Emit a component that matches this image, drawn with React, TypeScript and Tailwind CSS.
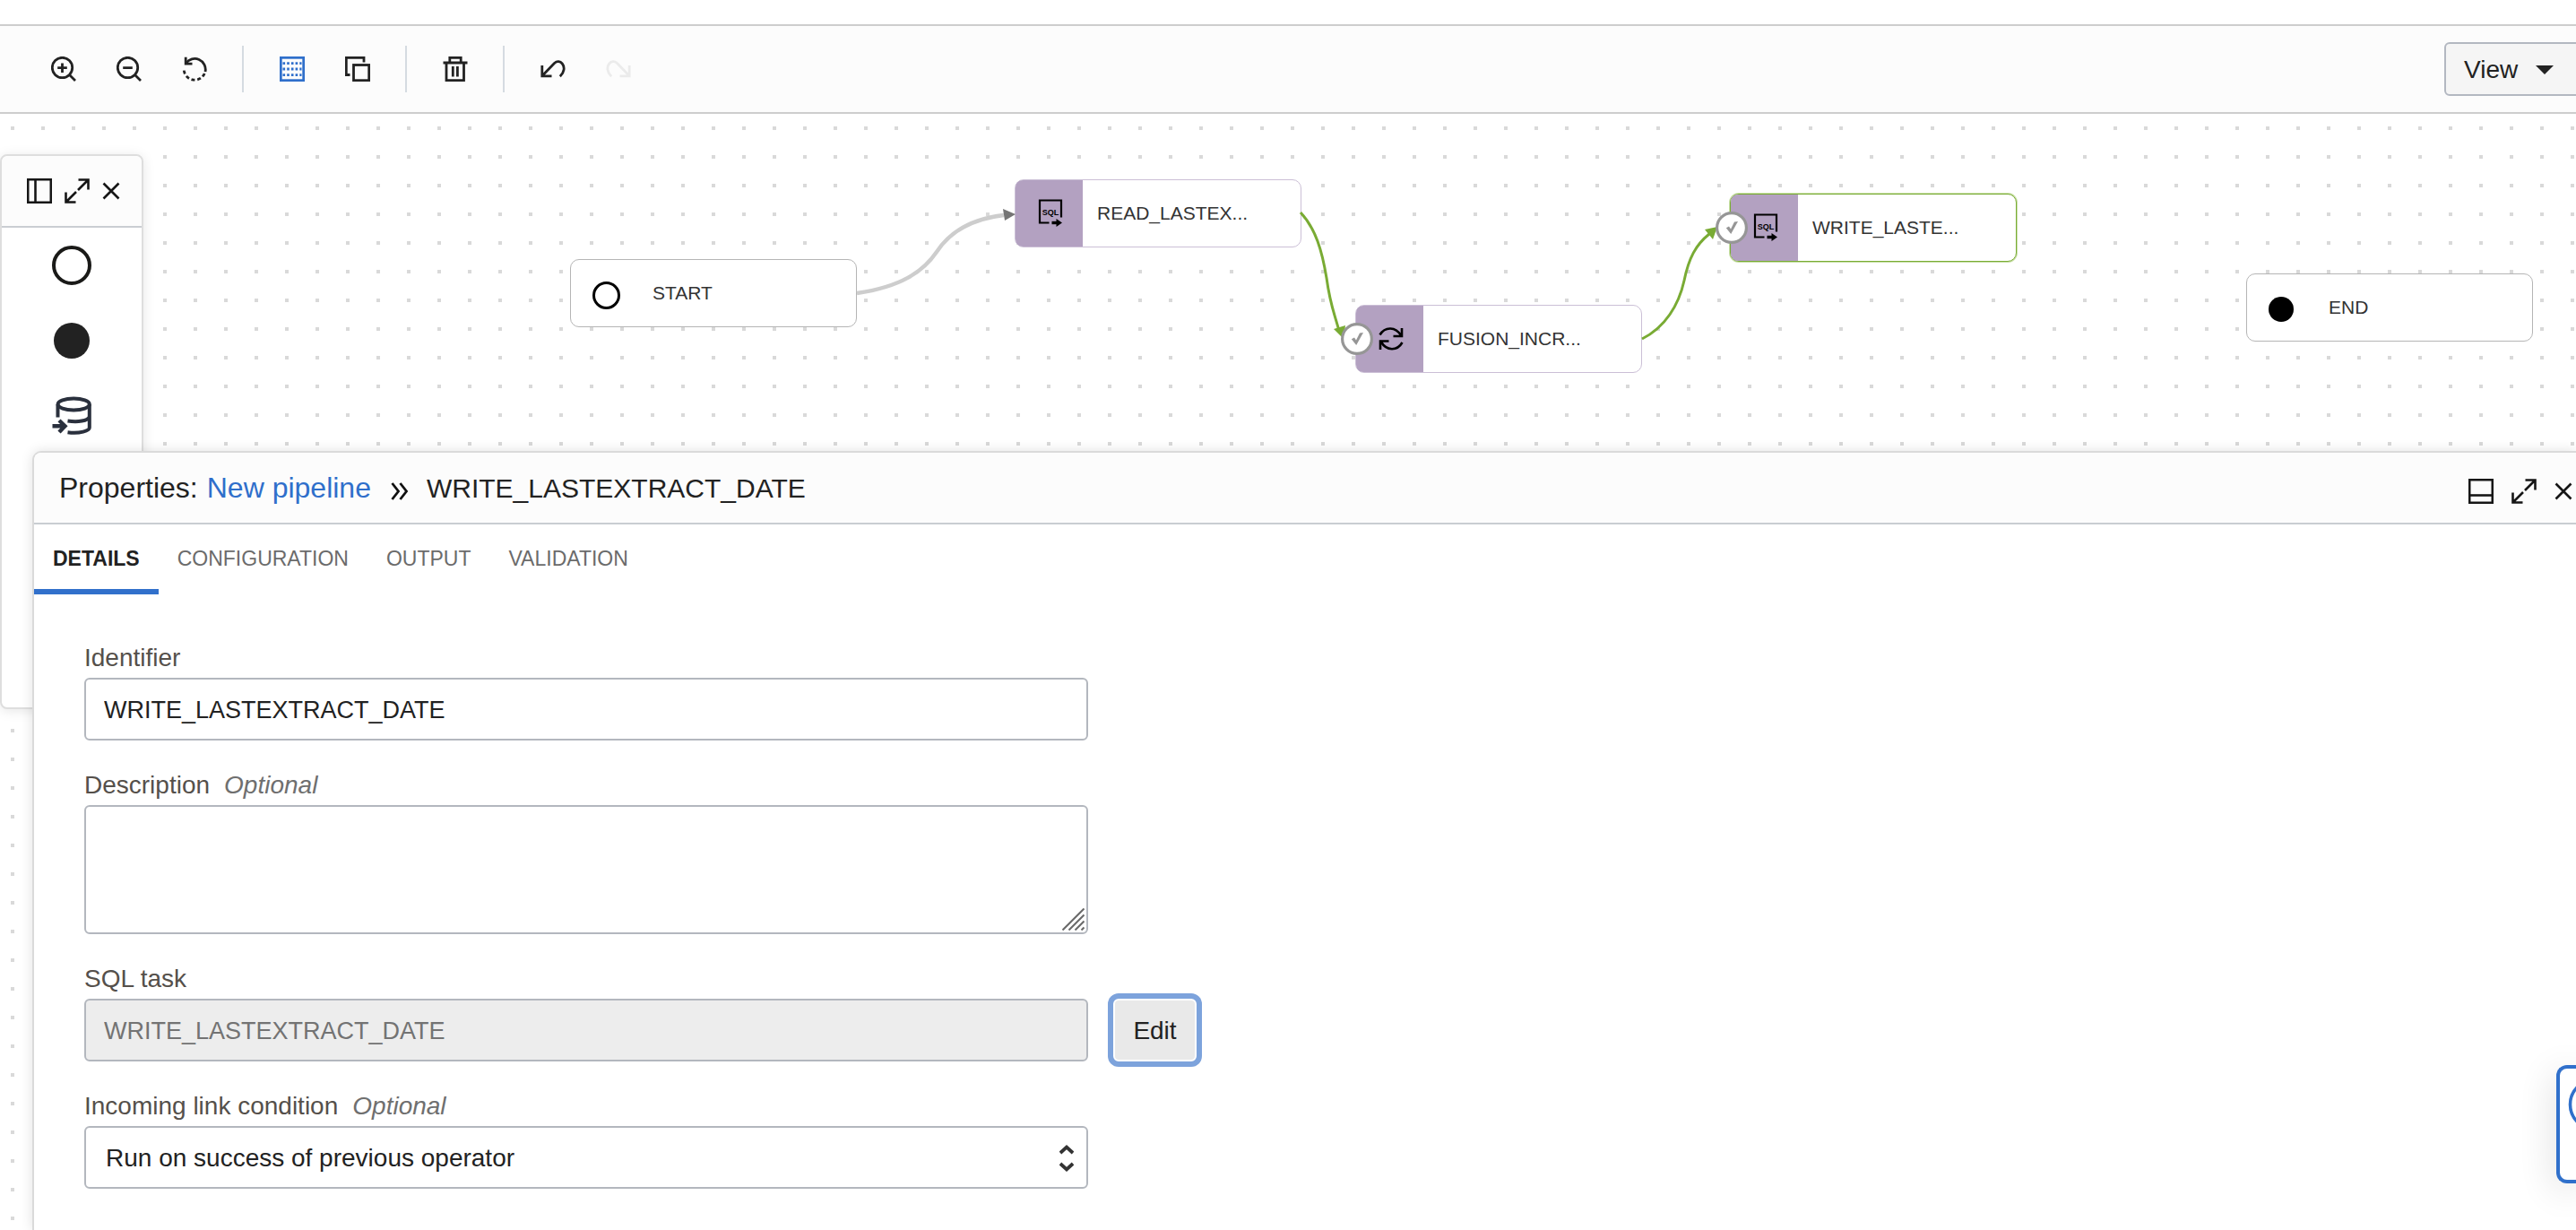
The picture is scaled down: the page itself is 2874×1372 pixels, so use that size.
import React from 'react';

interface IconButtonProps {
  label: string;
  className?: string;
  disabled?: boolean;
  children: React.ReactNode;
}

const ToolButton: React.FC<IconButtonProps> = ({ label, className = 'text-[#222]', disabled, children }) => (
  <button type="button" aria-label={label} disabled={disabled} className={`flex h-14 w-[73px] items-center justify-center ${className}`}>
    <svg className="h-7 w-7" viewBox="0 0 28 28" fill="none" stroke="currentColor" strokeWidth="2.8" aria-hidden="true">
      {children}
    </svg>
  </button>
);

const HeaderButton: React.FC<IconButtonProps> = ({ label, className = 'w-7', children }) => (
  <button type="button" aria-label={label} className={`shrink-0 text-[#161616] ${className}`}>
    <svg className="h-7 w-full" viewBox="0 0 28 28" fill="none" stroke="currentColor" strokeWidth="2.6" aria-hidden="true">
      {children}
    </svg>
  </button>
);

const Divider = () => <div className="mx-[17px] h-[52px] w-[2px] bg-[#d5dbe1]" />;

const ExpandPaths = () => (
  <>
    <path d="M15.5 1.5H26.5V12.5M26 2L15 13" />
    <path d="M1.5 15.5V26.5H12.5M2 26L13 15" />
  </>
);

const ClosePaths = () => <path d="M5.5 5.5L22.5 22.5M22.5 5.5L5.5 22.5" />;

const Toolbar = () => (
  <div className="flex h-[100px] shrink-0 items-center overflow-hidden border-y-2 border-[#cdcdcd] bg-[#fcfcfc] pl-[34px]">
    <ToolButton label="Zoom in">
      <circle cx="12.5" cy="12.5" r="11.2" />
      <path d="M20 20L27 27M12.5 7.5V18M7.2 12.7H17.8" />
    </ToolButton>
    <ToolButton label="Zoom out">
      <circle cx="12.5" cy="12.5" r="11.2" />
      <path d="M20 20L27 27M7.2 12.7H17.8" />
    </ToolButton>
    <ToolButton label="Reset zoom">
      <path d="M4.2 .8V8.2H11.5" />
      <path d="M4.5 7.5A12 12 0 0 1 26 17" />
      <path d="M25.2 19A12 12 0 0 1 2.2 14" strokeDasharray="4 2.8" />
    </ToolButton>
    <Divider />
    <ToolButton label="Toggle grid" className="text-[#2f6fcb]">
      <rect x="1.3" y="1.3" width="25.4" height="25.4" />
      <path d="M3.5 7.6H24.5M3.5 14H24.5M3.5 20.6H24.5" strokeDasharray="2.6 2.1" />
    </ToolButton>
    <ToolButton label="Duplicate">
      <path d="M21 6.5V1.3H1.3V20.5H5.5" />
      <rect x="9.5" y="9.5" width="17.2" height="17.2" />
    </ToolButton>
    <Divider />
    <ToolButton label="Delete">
      <path d="M0.5 7H27.5M7.8 7V1.4H20.2V7M4 7V26.7H23.5V7M11.3 11V22.5M16.4 11V22.5" />
    </ToolButton>
    <Divider />
    <ToolButton label="Undo">
      <path d="M1.8 10V21.8H12.5M2 21.5L15.5 7.5C18.5 4.8 22 5.2 24.3 8C27.3 11.8 26.8 17.5 21.8 22.3" />
    </ToolButton>
    <ToolButton label="Redo" disabled className="text-[#ebebeb]">
      <path d="M26.2 10V21.8H15.5M26 21.5L12.5 7.5C9.5 4.8 6 5.2 3.7 8C.7 11.8 1.2 17.5 6.2 22.3" />
    </ToolButton>
    <button
      type="button"
      className="-mr-4 ml-auto flex h-[60px] w-[163px] shrink-0 items-center gap-5 rounded-md border-2 border-[#b3b8c1] bg-[#f5f5f5] pl-5 pt-[2px] text-[28px] text-[#222]"
    >
      View
      <svg className="h-[10px] w-5" viewBox="0 0 20 10" fill="currentColor" aria-hidden="true">
        <path d="M0 0H20L10 10Z" />
      </svg>
    </button>
  </div>
);

const Palette = () => (
  <aside className="absolute left-0 top-[45px] h-[619px] w-40 rounded-lg border-2 border-[#dedede] bg-white shadow-[0_2px_14px_rgba(0,0,0,0.1)]">
    <div className="flex h-20 items-center rounded-t-lg border-b-2 border-[#cacdd2] bg-[#fcfcfc] pl-7">
      <HeaderButton label="Dock left">
        <rect x="1.2" y="1.2" width="25.6" height="25.6" />
        <path d="M9.5 1V27" />
      </HeaderButton>
      <HeaderButton label="Expand palette" className="ml-[14px] w-7">
        <ExpandPaths />
      </HeaderButton>
      <HeaderButton label="Close palette" className="ml-[10px] w-7">
        <ClosePaths />
      </HeaderButton>
    </div>
    <div className="flex flex-col items-center gap-10 pt-5">
      <button type="button" aria-label="Start operator" className="h-11 w-11 rounded-full border-4 border-[#1a1a18]" />
      <button type="button" aria-label="End operator" className="h-11 w-11 rounded-full border-2 border-transparent bg-[#222] bg-clip-padding" />
      <button type="button" aria-label="Integration task" className="h-11 w-11 text-[#2a303d]">
        <svg className="h-11 w-11" viewBox="0 0 44 44" fill="none" stroke="currentColor" strokeWidth="4" aria-hidden="true">
          <ellipse cx="24.2" cy="9" rx="17.6" ry="6.4" />
          <path d="M6.5 9V23.5M41.8 9V35C41.8 38.5 31 42 17.5 40.2M41.8 23C40 27.5 29 29.2 17.5 27.5" />
          <path d="M.5 33.2H14M8 27L14.5 33.2L8 40" strokeWidth="4.4" />
        </svg>
      </button>
    </div>
  </aside>
);

const SqlIcon = () => (
  <svg className="h-8 w-7" viewBox="0 0 28 32" fill="none" stroke="#000" strokeWidth="2.2" aria-hidden="true">
    <path d="M12.5 26.5H2V1.5H26V20.5" />
    <path d="M15.5 26.5H22" strokeWidth="3.4" />
    <path d="M20.5 22L27 26.5L20.5 31Z" fill="#000" stroke="none" />
    <text x="14" y="18" textAnchor="middle" fill="#000" stroke="none" fontSize="9" fontWeight="700">
      SQL
    </text>
  </svg>
);

const SyncIcon = () => (
  <svg className="h-7 w-7" viewBox="0 0 28 28" fill="none" stroke="#000" strokeWidth="2.6" aria-hidden="true">
    <path d="M26 2V11H16.5M1.5 9.5C7 .2 19 -.3 25.3 10.5" />
    <path d="M2 26V16.5H11.5M26.5 18C21 27.5 9 28 2.7 17" />
  </svg>
);

interface NodeProps {
  label: string;
  className: string;
  children: React.ReactNode;
}

const EventNode: React.FC<NodeProps> = ({ label, className, children }) => (
  <div className={`absolute flex h-[76px] w-80 items-center rounded-[10px] border border-[#b5b5b5] bg-white ${className}`}>
    <div className="flex w-[91px] items-center pl-6 pt-1">{children}</div>
    <span className="text-[21px] text-[#333]">{label}</span>
  </div>
);

const TaskNode: React.FC<NodeProps> = ({ label, className, children }) => (
  <div className={`absolute flex h-[76px] w-80 items-center rounded-[10px] border bg-white ${className}`}>
    <div className="flex h-full w-[75px] items-center justify-center rounded-l-[8px] bg-[#b3a1c1] pl-[2px]">{children}</div>
    <span className="pl-4 text-[21px] text-[#333]">{label}</span>
  </div>
);

const SuccessBadge = ({ className }: { className: string }) => (
  <svg className={`absolute h-9 w-9 ${className}`} viewBox="0 0 36 36" role="img" aria-label="Success">
    <circle cx="18" cy="18" r="16.4" fill="#fff" stroke="#969696" strokeWidth="3.2" />
    <path d="M11.8 18.2L15 16.4L17 19.6L21 11.6L25 11L17.2 25Z" fill="#969696" />
  </svg>
);

const Links = () => (
  <svg className="absolute left-0 top-0 h-[376px] w-full" fill="none" aria-hidden="true">
    <path d="M956 200C1005 193 1030 176 1045 154C1060 131 1085 117 1120 113" stroke="#cdcdcd" strokeWidth="4.4" />
    <path d="M1119 106L1133 112L1121 119Z" fill="#757575" />
    <path d="M1451 110C1468 128 1475 153 1480 183C1484 213 1488 220 1494 242" stroke="#79ab34" strokeWidth="3" />
    <path d="M1488 240L1501 236L1499 251Z" fill="#79ab34" />
    <path d="M1832 251C1858 238 1873 213 1879 186C1884 161 1892 146 1907 134" stroke="#79ab34" strokeWidth="3" />
    <path d="M1902 129L1916 126L1911 140Z" fill="#79ab34" />
  </svg>
);

const inputClass =
  'h-[70px] w-full rounded-md border-2 border-[#b3b7be] px-5 pt-[2px] text-[27px] text-[#222] outline-none disabled:bg-[#ededed] disabled:text-[#737373]';

interface FieldProps {
  id: string;
  label: string;
  optional?: boolean;
  children: React.ReactNode;
}

const Field: React.FC<FieldProps> = ({ id, label, optional, children }) => (
  <div className="w-[1120px] max-w-full">
    <label htmlFor={id} className="mb-[6px] flex gap-4 text-[28px] leading-8 text-[#55504b]">
      {label}
      {optional && <em className="text-[#6f6f6f]">Optional</em>}
    </label>
    {children}
  </div>
);

const TABS = ['DETAILS', 'CONFIGURATION', 'OUTPUT', 'VALIDATION'];

const PropertiesPanel = () => (
  <section className="absolute bottom-0 left-9 right-0 top-[376px] rounded-tl-[10px] border-l-2 border-t-2 border-[#dadada] bg-white shadow-[0_0_14px_rgba(0,0,0,0.12)]">
    <header className="flex h-20 items-center rounded-tl-[8px] border-b-2 border-[#c9cdd2] bg-[#fcfcfc] pl-7 text-[32px] text-[#222]">
      <span>Properties:</span>
      <a href="#pipeline" className="ml-[10px] text-[#2f6fcb]">
        New pipeline
      </a>
      <svg className="ml-[22px] mt-2 h-5 w-5" viewBox="0 0 20 20" fill="none" stroke="#111" strokeWidth="2.8" aria-hidden="true">
        <path d="M1.5 1L8.5 10L1.5 19M10.5 1L17.5 10L10.5 19" />
      </svg>
      <h1 className="ml-5 text-[30px]">WRITE_LASTEXTRACT_DATE</h1>
      <div className="ml-auto mt-2 flex items-center">
        <HeaderButton label="Dock bottom">
          <rect x="1.2" y="1.2" width="25.6" height="25.6" />
          <path d="M1 18.5H27" />
        </HeaderButton>
        <HeaderButton label="Expand properties" className="ml-5 w-7">
          <ExpandPaths />
        </HeaderButton>
        <HeaderButton label="Close properties" className="ml-4 w-7">
          <ClosePaths />
        </HeaderButton>
      </div>
    </header>

    <div role="tablist" className="flex h-[78px] text-[23px]">
      {TABS.map((tab, i) => (
        <button
          key={tab}
          type="button"
          role="tab"
          aria-selected={i === 0}
          className={`border-b-[6px] px-[21px] pt-1 ${i === 0 ? 'border-[#3170cb] font-bold text-[#222]' : 'border-transparent text-[#6b6b6b]'}`}
        >
          {tab}
        </button>
      ))}
    </div>

    <form className="flex flex-col gap-[34px] pl-14 pt-[55px]">
      <Field id="identifier" label="Identifier">
        <input id="identifier" type="text" defaultValue="WRITE_LASTEXTRACT_DATE" className={inputClass} />
      </Field>

      <Field id="description" label="Description" optional>
        <div className="relative">
          <textarea
            id="description"
            className="block h-36 w-full resize-none rounded-md border-2 border-[#b3b7be] px-5 py-3 text-[28px] text-[#222] outline-none"
          />
          {/* Resize grip */}
          <svg className="pointer-events-none absolute bottom-1 right-1 h-[25px] w-[25px]" viewBox="0 0 25 25" stroke="#6a6a6a" strokeWidth="2.1" aria-hidden="true">
            <path d="M.5 24.5L24.5 .5M7.5 24.5L24.5 7.5M14.5 24.5L24.5 14.5M21.5 24.5L24.5 21.5" />
          </svg>
        </div>
      </Field>

      <div className="flex items-end gap-7">
        <Field id="sql-task" label="SQL task">
          <input id="sql-task" type="text" disabled defaultValue="WRITE_LASTEXTRACT_DATE" className={inputClass} />
        </Field>
        <button
          type="button"
          className="h-[70px] w-[93px] rounded-md border-2 border-white bg-[#e9e9e9] pt-[2px] text-[28px] text-[#222] shadow-[0_0_0_6px_#7da3dc]"
        >
          Edit
        </button>
      </div>

      <Field id="link-condition" label="Incoming link condition" optional>
        <div className="relative">
          <select
            id="link-condition"
            className="block h-[70px] w-full appearance-none rounded-md border-2 border-[#b3b7be] bg-white px-[22px] pt-[2px] text-[28px] text-[#222] outline-none"
          >
            <option>Run on success of previous operator</option>
            <option>Run on failure of previous operator</option>
            <option>Always run</option>
          </select>
          <svg className="pointer-events-none absolute right-4 top-5 h-8 w-4" viewBox="0 0 16 32" fill="none" stroke="#333" strokeWidth="3.8" aria-hidden="true">
            <path d="M1 10L8 3.5L15 10M1 22L8 28.5L15 22" />
          </svg>
        </div>
      </Field>
    </form>
  </section>
);

const HelpWidget = () => (
  <button
    type="button"
    aria-label="Help"
    className="absolute bottom-[52px] right-0 h-[132px] w-[22px] overflow-hidden rounded-l-[12px] border-y-4 border-l-4 border-[#3070cb] bg-white shadow-[0_8px_40px_rgba(0,0,0,0.16)]"
  >
    <svg className="h-full w-full" viewBox="0 0 18 124" preserveAspectRatio="xMinYMin slice" fill="none" stroke="#3070cb" strokeWidth="3.6" aria-hidden="true">
      <circle cx="39" cy="40" r="27.5" />
    </svg>
  </button>
);

export default function App() {
  return (
    <div className="flex h-screen flex-col overflow-hidden bg-white pt-[27px] font-['Liberation_Sans',Arial,sans-serif]">
      <Toolbar />
      <main className="relative min-h-0 flex-1 overflow-hidden bg-[conic-gradient(from_270deg_at_4px_4px,#d9d9d9_90deg,transparent_0)] bg-[length:34px_32px] bg-[position:12px_14px]">
        <EventNode label="START" className="left-[636px] top-[162px]">
          <span className="h-[31px] w-[31px] rounded-full border-[3px] border-black" />
        </EventNode>
        <TaskNode label="READ_LASTEX..." className="left-[1132px] top-[73px] border-[#cbbfd6]">
          <SqlIcon />
        </TaskNode>
        <TaskNode label="FUSION_INCR..." className="left-[1512px] top-[213px] border-[#cbbfd6]">
          <SyncIcon />
        </TaskNode>
        <TaskNode label="WRITE_LASTE..." className="left-[1930px] top-[89px] border-[#79ab34] shadow-[0_0_0_1px_#c9e0a8]">
          <SqlIcon />
        </TaskNode>
        <EventNode label="END" className="left-[2506px] top-[178px]">
          <span className="h-7 w-7 rounded-full bg-black" />
        </EventNode>
        <Links />
        <SuccessBadge className="left-[1496px] top-[233px]" />
        <SuccessBadge className="left-[1914px] top-[109px]" />
        <Palette />
        <PropertiesPanel />
        <HelpWidget />
      </main>
    </div>
  );
}
